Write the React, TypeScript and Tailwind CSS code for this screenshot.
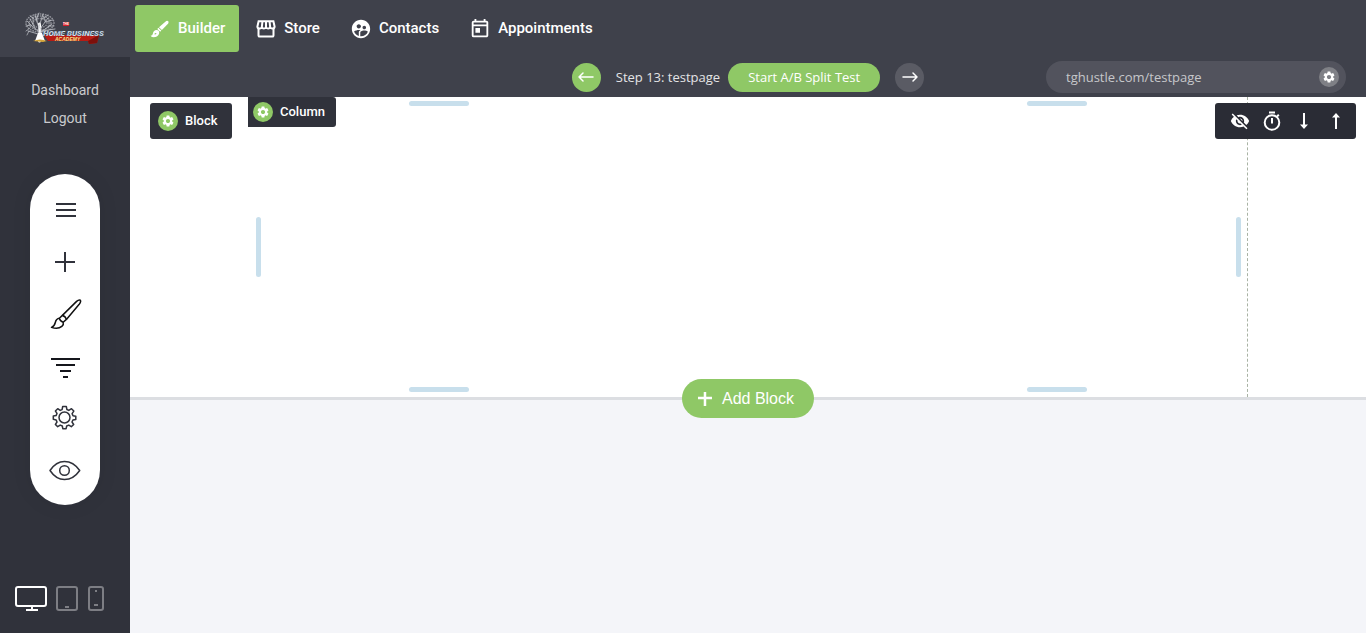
import React from 'react';
import { MdSettings, MdSupervisedUserCircle, MdOutlineToday, MdVisibilityOff } from 'react-icons/md';
import { clsx } from 'clsx';

const Logo = () => (
  <svg viewBox="0 0 80 34" className="w-20 h-[34px]" role="img" aria-label="The Home Business Academy">
    <g fill="none" stroke="#c3c5cb" strokeLinecap="round">
      <path d="M14.5 29C15.5 24 15 18 14.5 12" stroke="#fff" strokeWidth="3" />
      <path d="M14 20L6 13L1 14M10 16L5 7M14 16L10 3M14 15L18 2M15 17L23 6M16 20L27 12M17 19L30 17M13 22L3 19" strokeWidth="0.8" />
      <path d="M6 13L2 9M8 12L8 5M11 8L14 1M17 7L23 3M20 10L28 8M23 14L29 14M5 16L1 19M9 7L5 4M12 10L12 4M20 9L19 5M24 12L24 8M4 19L2 23" strokeWidth="0.7" />
      <ellipse cx="15" cy="11" rx="14" ry="9" strokeWidth="1.6" strokeDasharray="0.3 2.2" opacity="0.6" />
      <ellipse cx="15" cy="11" rx="11" ry="7" strokeWidth="1.6" strokeDasharray="0.3 2.4" opacity="0.6" />
      <ellipse cx="15" cy="11" rx="7" ry="4.5" strokeWidth="1.6" strokeDasharray="0.3 2.2" opacity="0.5" />
    </g>
    <path d="M10 29L13 21H17L20 29Z" fill="#fff" />
    <path d="M8 29Q15 26 22 29L18 30Z" fill="#d5a63a" />
    <path d="M19 23H74L72 31L64 32L63 29H23Z" fill="#b81c14" />
    <path d="M63 29L74 23L72 31L64 32Z" fill="#7d100b" />
    <rect x="38" y="10" width="6" height="4" fill="#d81e28" />
    <text x="38" y="13" fontSize="3" fontWeight="700" fill="#fff" fontFamily="Liberation Sans, sans-serif">THE</text>
    <text x="18" y="24" fontSize="8" fontWeight="900" fontStyle="italic" fill="#dfe8f2" stroke="#31527a" strokeWidth="0.2" fontFamily="Roboto, sans-serif">HOME BUSINESS</text>
    <text x="30" y="29" fontSize="5" fontWeight="700" fontStyle="italic" fill="#f4e08a" fontFamily="Liberation Sans, sans-serif">ACADEMY</text>
  </svg>
);

const BrushIcon = () => (
  <svg viewBox="0 0 20 20" className="w-5 h-5" fill="currentColor" aria-hidden="true">
    <path d="M16.2 2Q17.6 1.4 18.3 2.4Q19 3.5 18 4.7L11.9 11L9 8.2Z" />
    <path d="M8.4 8.8L11.3 11.6L10.2 12.7L7.3 9.9Z" />
    <path fillRule="evenodd" d="M6.5 11.1Q9.5 11.2 9.2 14.3Q8.2 18.3 3.2 18.3Q1.2 18.2.6 16.8Q2.6 16.7 2.9 14.4Q3.5 11.4 6.5 11.1ZM5.5 13.9Q4.2 14.1 4.6 15.6Q6.3 15.7 6.5 14.2Z" />
  </svg>
);

const StoreIcon = () => (
  <svg viewBox="0 0 20 20" className="w-5 h-5" fill="none" stroke="currentColor" strokeWidth="2" aria-hidden="true">
    <path d="M2.5 10V16.4Q2.5 17.6 3.7 17.6H16.3Q17.5 17.6 17.5 16.4V10" />
    <path d="M2.6 2.2H17.4L18.6 7.6Q18.5 9.6 16.4 9.6Q14.4 9.6 14.2 8Q13.8 9.6 12.1 9.6Q10.2 9.6 10 8Q9.8 9.6 7.9 9.6Q6.2 9.6 5.8 8Q5.6 9.6 3.6 9.6Q1.5 9.6 1.4 7.6Z" />
    <path d="M6.4 2.5L5.8 8.5M10 2.5V8.5M13.6 2.5L14.2 8.5" />
  </svg>
);

const TimerIcon = () => (
  <svg viewBox="0 0 20 20" className="w-5 h-5" fill="none" stroke="currentColor" strokeWidth="2" aria-hidden="true">
    <circle cx="10" cy="11.5" r="7.3" />
    <path d="M7 1.5H13M10 7V12.5M15 5.5L16.8 3.8" />
  </svg>
);

const LongArrow = ({ className }: { className?: string }) => (
  <svg viewBox="0 0 20 20" className={clsx('w-5 h-5', className)} fill="none" stroke="currentColor" strokeWidth="1.5" strokeLinecap="round" strokeLinejoin="round" aria-hidden="true">
    <path d="M3 10H17M13 6L17 10L13 14" />
  </svg>
);

const MoveArrow = ({ className }: { className?: string }) => (
  <svg viewBox="0 0 20 20" className={clsx('w-5 h-5', className)} fill="currentColor" aria-hidden="true">
    <path d="M10 2L14 6.4H11V18H9V6.4H6Z" />
  </svg>
);

const navItems = [
  { title: 'Builder', icon: <BrushIcon />, active: true },
  { title: 'Store', icon: <StoreIcon /> },
  { title: 'Contacts', icon: <MdSupervisedUserCircle className="w-[22px] h-[22px] -m-px" /> },
  { title: 'Appointments', icon: <MdOutlineToday className="w-[22px] h-[22px] -m-px" /> },
];

const tools = [
  {
    title: 'Menu',
    icon: <path d="M6 9H26M6 15H26M6 21H26" strokeWidth="2" />,
  },
  {
    title: 'Add',
    icon: <path d="M15 5V25M5 15H25" strokeWidth="2" />,
  },
  {
    title: 'Styles',
    icon: (
      <g stroke="#111" strokeWidth="1.5" strokeLinejoin="round">
        <path d="M12.4 16.4L26.6 2.4Q29 .2 30.3 1.2Q31.3 2.5 29.4 5L16.4 20.4" />
        <path d="M12.4 16.4L9.4 19.2Q10 22.4 13.2 23.2L16.4 20.4Q15.6 17.2 12.4 16.4Z" />
        <path d="M9.4 19.2Q6.2 19.5 5.3 23.5Q4.6 27 1.5 28.4Q8 30.7 11.8 27.4Q14 25.3 13.2 23.2" />
      </g>
    ),
  },
  {
    title: 'Layers',
    icon: <path d="M1 8H30M6 14H25M10 20H21M13 26H18" stroke="#15161c" strokeWidth="2" />,
  },
  {
    title: 'Settings',
    icon: (
      <g strokeWidth="1.5" strokeLinejoin="round">
        <circle cx="14.5" cy="14.5" r="5.5" />
        <path d="M12.7 3.5H16.3L16.9 6.5L18.8 7.4L21.5 5.7L23.8 8.1L22.1 10.6L23 12.7L25.8 13.2V16.4L22.9 17L22 19L23.7 21.5L21.3 23.7L18.8 22.1L16.7 23L16.1 25.7H12.8L12.3 23L10.2 22.1L7.7 23.7L5.4 21.4L7 19L6.1 16.9L3.3 16.3V13.1L6.1 12.6L7 10.4L5.4 8L7.7 5.7L10.2 7.4L12.1 6.6Z" />
      </g>
    ),
  },
  {
    title: 'Preview',
    icon: (
      <g strokeWidth="1.5">
        <path d="M0 15.5Q6 6.5 14.5 6.5Q23.5 6.5 29.7 15.5Q23.5 24.5 14.5 24.5Q6 24.5 0 15.5Z" strokeLinejoin="round" />
        <circle cx="14.5" cy="15.5" r="4.8" />
      </g>
    ),
  },
];

const Sidebar = () => (
  <aside className="w-[130px] shrink-0 flex flex-col bg-[#30323b]">
    <div className="h-[57px] pt-3 pl-[25px] bg-[#3f414b]">
      <Logo />
    </div>
    <div className="pt-[19px] flex flex-col items-center text-sm leading-7 text-[#c9cacd]">
      <a href="#dashboard">Dashboard</a>
      <a href="#logout">Logout</a>
    </div>
    <div className="mt-[42px] mx-[30px] pt-[10px] pb-[9px] rounded-full bg-white shadow-[0_0_20px_rgba(0,0,0,0.08)] flex flex-col items-center">
      {tools.map((tool) => (
        <button key={tool.title} aria-label={tool.title} className="w-full h-[52px] flex items-center justify-center">
          <svg viewBox="0 0 30 30" className="w-[30px] h-[30px] overflow-visible" fill="none" stroke="#30323b">
            {tool.icon}
          </svg>
        </button>
      ))}
    </div>
    <div className="mt-auto pl-[15px] pb-[21px] flex gap-[9px]">
      <button aria-label="Desktop" className="text-white">
        <svg viewBox="0 0 32 26" className="w-8 h-[26px]" fill="none" stroke="currentColor" strokeWidth="2">
          <rect x="1" y="1" width="30" height="19" rx="2" />
          <path d="M17 20V24M11 24H23" />
        </svg>
      </button>
      <button aria-label="Tablet" className="text-[#7d7e84]">
        <svg viewBox="0 0 22 26" className="w-[22px] h-[26px]" fill="none" stroke="currentColor" strokeWidth="2">
          <rect x="1" y="1" width="20" height="23" rx="2" />
          <path d="M9 21H13" />
        </svg>
      </button>
      <button aria-label="Phone" className="text-[#7d7e84]">
        <svg viewBox="0 0 17 26" className="w-[17px] h-[26px]" fill="none" stroke="currentColor" strokeWidth="2">
          <rect x="2" y="1" width="14" height="23" rx="2" />
          <path d="M8 5H10M7 19H11" />
        </svg>
      </button>
    </div>
  </aside>
);

const Header = () => (
  <header className="bg-[#3f414b]">
    <nav className="h-[57px] p-[5px] flex items-start gap-0.5">
      {navItems.map((item) => (
        <a
          key={item.title}
          href={`#${item.title.toLowerCase()}`}
          className={clsx(
            'h-[47px] pl-[15px] pr-[14px] flex items-center gap-2 rounded-[3px] text-[15px] font-medium text-white',
            item.active && 'bg-[#8fc866]'
          )}
        >
          {item.icon}
          {item.title}
        </a>
      ))}
    </nav>
    <div className="h-10 pr-5 grid grid-cols-[1fr_auto_1fr] items-center font-['Open_Sans',sans-serif] text-[13px]">
      <div className="col-start-2 ml-5 flex items-center">
        <button aria-label="Previous step" className="w-[29px] h-[29px] rounded-full bg-[#8fc866] text-white flex items-center justify-center">
          <LongArrow className="rotate-180" />
        </button>
        <span className="ml-[15px] mr-2 pt-0.5 text-[#e4e4e6]">Step 13: testpage</span>
        <button className="h-[29px] px-5 pt-0.5 rounded-full bg-[#8fc866] text-white">Start A/B Split Test</button>
        <button aria-label="Next step" className="ml-[15px] w-[29px] h-[29px] rounded-full bg-[#5a5b64] text-white flex items-center justify-center">
          <LongArrow />
        </button>
      </div>
      <div className="w-[300px] h-8 pl-5 pr-[7px] justify-self-end flex items-center justify-between rounded-full bg-[#52535d] text-[#c6c7ca]">
        <a href="#testpage" className="pt-0.5">tghustle.com/testpage</a>
        <button aria-label="Page settings" className="w-5 h-5 rounded-full bg-[#7f8086] text-white flex items-center justify-center">
          <MdSettings className="w-[14px] h-[14px]" />
        </button>
      </div>
    </div>
  </header>
);

const GearBadge = () => (
  <span className="w-5 h-5 rounded-full bg-[#8fc866] flex items-center justify-center">
    <MdSettings className="w-[14px] h-[14px]" />
  </span>
);

const Canvas = () => (
  <section className="relative h-[303px] bg-white border-b-[3px] border-[#dcdee2]">
    <div className="relative w-full max-w-[1000px] h-full mx-auto border-r border-dashed border-[#a9b3a4]">
      <button className="absolute top-0 left-0 h-[30px] pl-[5px] pr-[11px] flex items-center gap-[7px] rounded-r-[3px] bg-[#30323b] text-white text-[13px] font-medium">
        <GearBadge />
        Column
      </button>
      {/* resize handles */}
      <span className="absolute top-1 left-[161px] w-[60px] h-[5px] rounded-full bg-[#c8dfec]" />
      <span className="absolute top-1 right-40 w-[60px] h-[5px] rounded-full bg-[#c8dfec]" />
      <span className="absolute bottom-[5px] left-[161px] w-[60px] h-[5px] rounded-full bg-[#c8dfec]" />
      <span className="absolute bottom-[5px] right-40 w-[60px] h-[5px] rounded-full bg-[#c8dfec]" />
      <span className="absolute top-[120px] left-2 w-[5px] h-[60px] rounded-full bg-[#c8dfec]" />
      <span className="absolute top-[120px] right-1.5 w-[5px] h-[60px] rounded-full bg-[#c8dfec]" />
    </div>

    <button className="absolute top-1.5 left-5 h-9 pl-2 pr-[15px] flex items-center gap-[7px] rounded-[3px] bg-[#30323b] text-white text-[13px] font-medium">
      <GearBadge />
      Block
    </button>

    <div className="absolute top-1.5 right-[10px] h-9 pl-[15px] pr-[10px] flex items-center gap-3 rounded-[3px] bg-[#2a2c35] text-white">
      <button aria-label="Hide block"><MdVisibilityOff className="w-5 h-5" /></button>
      <button aria-label="Timer"><TimerIcon /></button>
      <button aria-label="Move down"><MoveArrow className="rotate-180" /></button>
      <button aria-label="Move up"><MoveArrow /></button>
    </div>

    <button className="absolute left-1/2 -translate-x-1/2 -bottom-[21px] h-[39px] pl-4 pr-5 flex items-center gap-[10px] rounded-full bg-[#8fc866] text-white text-base whitespace-nowrap font-['Liberation_Sans',sans-serif]">
      <svg viewBox="0 0 14 14" className="w-[14px] h-[14px]" fill="none" stroke="currentColor" strokeWidth="2.5" aria-hidden="true">
        <path d="M7 0V14M0 6H14" />
      </svg>
      Add Block
    </button>
  </section>
);

const App = () => {
  return (
    <div className="min-h-screen flex bg-[#f4f5f9] font-[Roboto,sans-serif]">
      <Sidebar />
      <main className="flex-1 min-w-0">
        <Header />
        <Canvas />
      </main>
    </div>
  );
};

export default App;
